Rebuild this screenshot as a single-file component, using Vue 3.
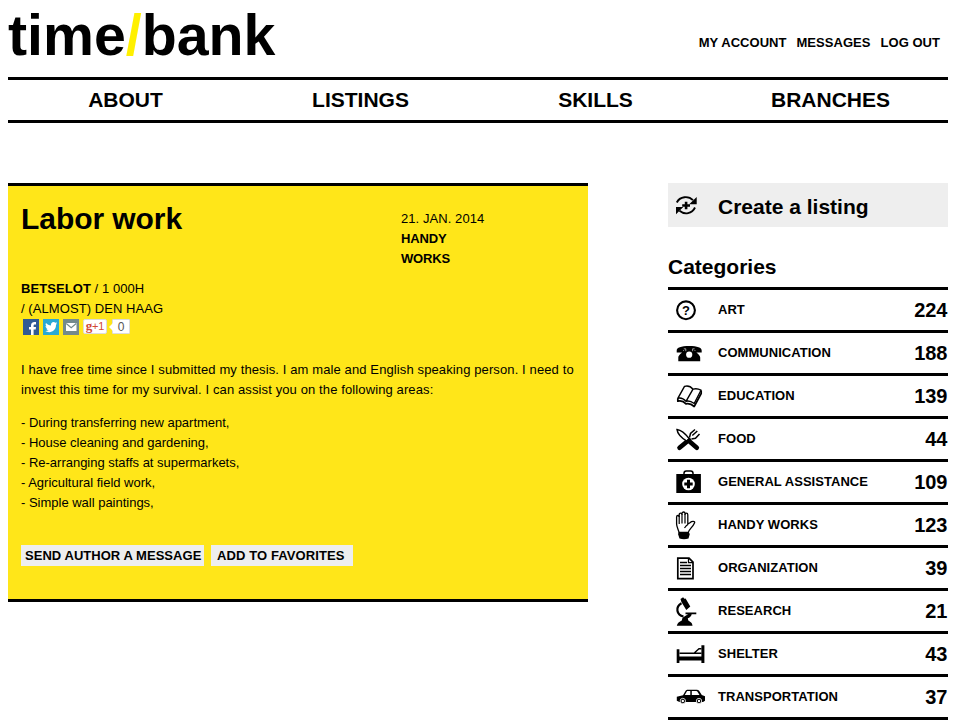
<script setup>
const account = ['MY ACCOUNT', 'MESSAGES', 'LOG OUT']
const nav = ['ABOUT', 'LISTINGS', 'SKILLS', 'BRANCHES']
const offers = [
  '- During transferring new apartment,',
  '- House cleaning and gardening,',
  '- Re-arranging staffs at supermarkets,',
  '- Agricultural field work,',
  '- Simple wall paintings,'
]
const categories = [
  { id: 'art', name: 'ART', count: 224 },
  { id: 'phone', name: 'COMMUNICATION', count: 188 },
  { id: 'book', name: 'EDUCATION', count: 139 },
  { id: 'food', name: 'FOOD', count: 44 },
  { id: 'aid', name: 'GENERAL ASSISTANCE', count: 109 },
  { id: 'hand', name: 'HANDY WORKS', count: 123 },
  { id: 'page', name: 'ORGANIZATION', count: 39 },
  { id: 'scope', name: 'RESEARCH', count: 21 },
  { id: 'bed', name: 'SHELTER', count: 43 },
  { id: 'car', name: 'TRANSPORTATION', count: 37 }
]
</script>

<template>
  <div class="page">
    <header class="header">
      <h1 class="logo">time<span class="slash">/</span>bank</h1>
      <nav class="account">
        <a v-for="a in account" :key="a">{{ a }}</a>
      </nav>
    </header>
    <nav class="nav">
      <a v-for="n in nav" :key="n">{{ n }}</a>
    </nav>

    <main class="content">
      <article class="card">
        <div class="card-head">
          <h2 class="title">Labor work</h2>
          <div class="meta">
            <div>21. JAN. 2014</div>
            <b>HANDY WORKS</b>
          </div>
        </div>
        <div class="author">
          <div><b>BETSELOT</b> / 1 000H</div>
          <div>/ (ALMOST) DEN HAAG</div>
        </div>
        <div class="share">
          <svg class="sq" viewBox="0 0 16 16">
            <rect width="16" height="16" fill="#315b94" />
            <path fill="#fff" d="M8 16v-5.500H6V8h2V6.500C8 4.300 9.300 3 11.500 3H13v2.500h-1.200c-.8 0-1.200.4-1.200 1.200V8H13l-.3 2.500h-2.100V16z" />
          </svg>
          <svg class="sq" viewBox="0 0 16 16">
            <rect width="16" height="16" fill="#2ba9d4" />
            <path fill="#fff" d="M3 4c1.4 1.6 3 2.3 5 2.4C7.7 4.400 9 3 10.500 3c.8 0 1.400.3 1.900.8l1.600-.6-.9 1.500 1.100-.2-1.200 1.300c.2 4.300-3 7.400-6.800 7.400-1.600 0-2.900-.4-4-1.100 1.400.1 2.500-.2 3.500-1-1.200-.1-2-.8-2.300-1.700h1C3.200 9 2.500 8 2.500 6.900l1.100.3C2.500 6.300 2.300 5.200 3 4z" />
          </svg>
          <svg class="sq" viewBox="0 0 16 16">
            <rect width="16" height="16" fill="#738a8d" />
            <rect x="3" y="4" width="10.500" height="8" fill="#fff" />
            <path d="M3.200 4.500 8.200 8.700l5-4.200" fill="none" stroke="#738a8d" stroke-width="1.200" />
          </svg>
          <div class="gplus"><span class="g">g</span><span>+1</span></div>
          <div class="bubble">0</div>
        </div>
        <p class="intro">I have free time since I submitted my thesis. I am male and English speaking person. I need to<br>invest this time for my survival. I can assist you on the following areas:</p>
        <div class="offers">
          <div v-for="o in offers" :key="o">{{ o }}</div>
        </div>
        <div class="actions">
          <a class="btn send">SEND AUTHOR A MESSAGE</a>
          <a class="btn fav">ADD TO FAVORITES</a>
        </div>
      </article>

      <aside class="side">
        <a class="create">
          <svg class="create-icon" viewBox="0 0 24 24">
            <g fill="none" stroke="#000" stroke-width="1.900">
              <path d="M1.800 8.500C4.800 2.200 13.500 1.400 18 6.200" />
              <path d="M20 13.500c-3 6.300-10.300 7.600-15.500 3.300" />
            </g>
            <path d="M21.700 3v7.200h-7.500zM1 20.200v-7.300h7.300z" />
            <path d="M9.800 7.700h2.600v2.600H15v2.400h-2.600v2.600H9.800v-2.600H7.200v-2.400h2.600z" />
          </svg>
          <span>Create a listing</span>
        </a>
        <h3 class="heading">Categories</h3>
        <ul class="list">
          <li v-for="c in categories" :key="c.id">
            <svg class="icon" viewBox="0 0 40 40">
              <g v-if="c.id === 'art'">
                <circle cx="18" cy="20.300" r="8.900" fill="none" stroke="#000" stroke-width="2.100" />
                <text x="18.100" y="25" text-anchor="middle" font-family="Liberation Sans" font-weight="700" font-size="13">?</text>
              </g>
              <g v-else-if="c.id === 'phone'">
                <path d="M8.700 19.500v-2c0-3 4.300-4.500 12.500-4.500s12.500 1.500 12.500 4.500v2h-6.400v-2.300h-1.100c2 2.300 6 4.700 6 7.300v3.800H10.300v-3.800c0-2.600 4-5 6-7.300h-1.100v2.300z" />
                <path d="M15.800 15.800h2v2.400M26.600 15.800h-2v2.400" stroke="#fff" stroke-width=".6" fill="none" />
                <circle cx="21.200" cy="21.700" r="3.100" fill="#fff" />
              </g>
              <g v-else-if="c.id === 'book'" fill="none" stroke="#000" stroke-width="1.400" stroke-linejoin="round">
                <path d="M16.500 10.400 9.800 22.300c3-.8 5.700.2 8.200 3L25 13.200c-2.300-2.800-5.300-3.700-8.500-2.800zM25 13.200c2.500-.8 5.300-.5 8 1l-6.800 13.300c-2.700-2-5.500-3-8.200-2.200" />
                <path stroke-width="1.700" d="M9.800 22.500v2.700c3.300-.8 5.800 0 8.200 2.700 3-.6 5.700.3 8.200 2.600l7-13v-3" />
              </g>
              <g v-else-if="c.id === 'food'">
                <path d="m18.500 23-7 5.800" stroke="#000" stroke-width="4.600" stroke-linecap="round" />
                <path d="m22.500 19.500-5 4.500" stroke="#000" stroke-width="3" />
                <path d="M9 10.500c4 .5 9 5 12.300 9.300l-2.500 2.300C14.500 19.500 9.500 15 9 10.500z" fill="#fff" stroke="#000" stroke-width="1.500" />
                <path d="m21 22 7.800 6.700" stroke="#000" stroke-width="4.600" stroke-linecap="round" />
                <path d="m21.500 18.500 1-4 4.500-4M24.300 16.500l5-4.500M23.500 20l4-.8 4-4.200" fill="none" stroke="#000" stroke-width="1.500" />
              </g>
              <g v-else-if="c.id === 'aid'">
                <path d="M16 12.500v-1.200c0-1.600 1-2.300 2.300-2.300h4.400c1.300 0 2.300.7 2.300 2.300v1.200" fill="none" stroke="#000" stroke-width="1.500" />
                <path d="M8.300 12h24.600v19H8.300z" />
                <circle cx="20.500" cy="22" r="6.300" fill="#fff" />
                <path d="M19 17.800h3v2.700h2.700v3H22v2.700h-3v-2.700h-2.700v-3H19z" />
              </g>
              <g v-else-if="c.id === 'hand'">
                <path d="M11 27.500c0-2-2.400-5-2.400-8.500v-7c0-2 2.600-2 2.600 0V9.700c0-2 2.800-2 2.800 0V8.500c0-2 3-2 3 0v1.200c0-2 2.800-2 2.800 0v9.300l2.500-1.500c1.500-1.700 5-1.500 4.300.2-2 4.800-5.300 6-6.300 9.800z" fill="#fff" stroke="#000" stroke-width="1.300" />
                <path d="M11.200 11v8M14 9v9.500M17 9v9.500M16.500 23c1-1.500 2-2.800 3.500-3.500" fill="none" stroke="#000" stroke-width="1.200" />
                <path d="M11 27c3 1.400 6 1.400 9.600.3l1.200 1.700-1.300 4.500c-3 .9-6 .9-9 0L10 29z" />
              </g>
              <g v-else-if="c.id === 'page'">
                <path d="M9.800 10.200H21l4 4v16.500H9.800z" fill="#fff" stroke="#000" stroke-width="1.700" />
                <path d="M20.500 10v4.700H25" fill="none" stroke="#000" stroke-width="1.300" />
                <path d="M12 14.500h7M12 17.500h11M12 20.500h11M12 23.500h11M12 26.500h11" stroke="#000" stroke-width="1.300" />
              </g>
              <g v-else-if="c.id === 'scope'">
                <path d="m12.500 8 2.600-1.700 1.200 1.500 1.300-.3 4.700 8-4 3.400-4.900-8z" />
                <path d="M13.500 12.300C7 16 8.500 24 15.500 25.500" fill="none" stroke="#000" stroke-width="2.200" />
                <path d="M17.500 21.500h10.800v1.700h-4.600c-.5 2-1.900 3.400-3.900 4l.5 2.200c2 1.300 4 2 4.200 5.300H8.800c.5-3 2.500-4 5-5.300l.7-2.600 2.700-1.700 2.900-1.900h-2.600z" />
              </g>
              <g v-else-if="c.id === 'bed'">
                <path d="M8.700 15.300h2.700v7.200h22v-11.200h3V29h-3v-2.500h-22V29H8.700z" />
                <path d="M11.500 19.200h22M26.500 18.800l4.500-4h2.500" fill="none" stroke="#000" stroke-width="1.400" />
              </g>
              <g v-else>
                <path d="M8.800 19.700 15 18.200l2.800-4.600c.5-.7 1-.9 2-.9h9c1 0 1.700.3 2.300 1l2.700 4.400 3.200 1.200v4.400l-2 1.300H11.500l-2.700-1.300z" />
                <path d="m16.800 18 2-3.500c.2-.3.500-.4.900-.4h2.600V18zM23.800 14.100h4.500c.5 0 .9.200 1.200.6l2 3.300h-7.700z" fill="#fff" />
                <circle cx="14.800" cy="24" r="2.700" stroke="#fff" stroke-width=".8" />
                <circle cx="31" cy="24" r="2.700" stroke="#fff" stroke-width=".8" />
                <circle cx="14.800" cy="24" r="1.200" fill="#fff" />
                <circle cx="31" cy="24" r="1.200" fill="#fff" />
              </g>
            </svg>
            <span class="name">{{ c.name }}</span>
            <span class="count">{{ c.count }}</span>
          </li>
        </ul>
      </aside>
    </main>
  </div>
</template>

<style>
body {
  background: #fff;
  overflow: hidden;
}
</style>

<style scoped>
.page {
  width: 940px;
  height: 726px;
  overflow: hidden;
  margin-left: 8px;
  font: 13px/20px "Liberation Sans", Arial, sans-serif;
  color: #000;
}
h1, h2, h3, p, ul {
  margin: 0;
  padding: 0;
}
.header {
  display: flex;
  justify-content: space-between;
  height: 77px;
}
.logo {
  font-size: 57.3px;
  line-height: 70px;
}
.slash {
  color: #fff000;
}
.account {
  display: flex;
  gap: 10px;
  padding: 33px 8px 0 0;
  font-weight: 700;
  letter-spacing: 0.04px;
}
.nav {
  display: grid;
  grid-template-columns: repeat(4, 1fr);
  height: 40px;
  border-top: 3px solid #000;
  border-bottom: 3px solid #000;
  text-align: center;
  font-size: 21px;
  font-weight: 700;
  line-height: 40px;
}
.content {
  display: flex;
  justify-content: space-between;
  align-items: flex-start;
  padding-top: 60px;
}
.card {
  box-sizing: border-box;
  width: 580px;
  height: 419px;
  padding: 13px 13px 0;
  background: #ffe619;
  border-top: 3px solid #000;
  border-bottom: 3px solid #000;
}
.card-head {
  display: flex;
  height: 80px;
}
.title {
  width: 380px;
  font-size: 30px;
  line-height: 40px;
  letter-spacing: -0.06px;
}
.meta {
  width: 90px;
  padding-top: 10px;
}
.meta div,
.author {
  letter-spacing: 0.07px;
}
.meta b {
  display: block;
  width: 60px;
  letter-spacing: -0.15px;
}
.share {
  display: flex;
  gap: 4px;
  height: 16px;
  margin-left: 2px;
}
.sq {
  width: 16px;
  height: 16px;
}
.gplus {
  box-sizing: border-box;
  width: 24px;
  height: 15px;
  border: 1px solid #dcdcdc;
  border-radius: 2px;
  background: #fff;
  color: #d14836;
  font-size: 11px;
  letter-spacing: -0.2px;
  line-height: 12px;
  text-align: center;
}
.g {
  font-family: "Liberation Serif", serif;
  font-weight: 700;
  font-size: 13px;
}
.bubble {
  position: relative;
  box-sizing: border-box;
  width: 18px;
  height: 15px;
  margin-left: 1px;
  border: 1px solid #dcdcdc;
  border-radius: 1px;
  background: #fff;
  color: #555;
  font-size: 12px;
  line-height: 15px;
  text-align: center;
}
.bubble::before {
  content: "";
  position: absolute;
  left: -4px;
  top: 3px;
  border: 4px solid transparent;
  border-left: 0;
  border-right-color: #fff;
}
.intro {
  margin-top: 25px;
  white-space: nowrap;
  letter-spacing: 0.115px;
}
.offers {
  margin-top: 13px;
  letter-spacing: -0.01px;
}
.actions {
  display: flex;
  gap: 7px;
  margin-top: 32px;
}
.btn {
  box-sizing: border-box;
  height: 21px;
  background: #eee;
  font-weight: 700;
  line-height: 21px;
  letter-spacing: 0.04px;
  white-space: nowrap;
}
.send {
  width: 183px;
  padding-left: 4px;
}
.fav {
  width: 142px;
  padding-left: 6px;
  letter-spacing: 0.1px;
}
.side {
  width: 280px;
}
.create {
  display: flex;
  height: 44px;
  background: #eee;
  font-size: 21px;
  font-weight: 700;
  line-height: 48px;
}
.create-icon {
  width: 24px;
  height: 24px;
  margin: 11px 19px 0 7px;
}
.heading {
  height: 60px;
  padding-top: 20px;
  box-sizing: border-box;
  font-size: 21px;
  line-height: 40px;
}
.list {
  list-style: none;
  border-top: 3px solid #000;
}
.list li {
  display: flex;
  height: 40px;
  border-bottom: 3px solid #000;
  font-weight: 700;
}
.icon {
  width: 40px;
  height: 40px;
  margin-right: 10px;
}
.name {
  flex: 1;
  line-height: 39px;
  letter-spacing: 0.04px;
}
.count {
  padding-right: 0.5px;
  font-size: 20px;
  line-height: 40px;
}
</style>
